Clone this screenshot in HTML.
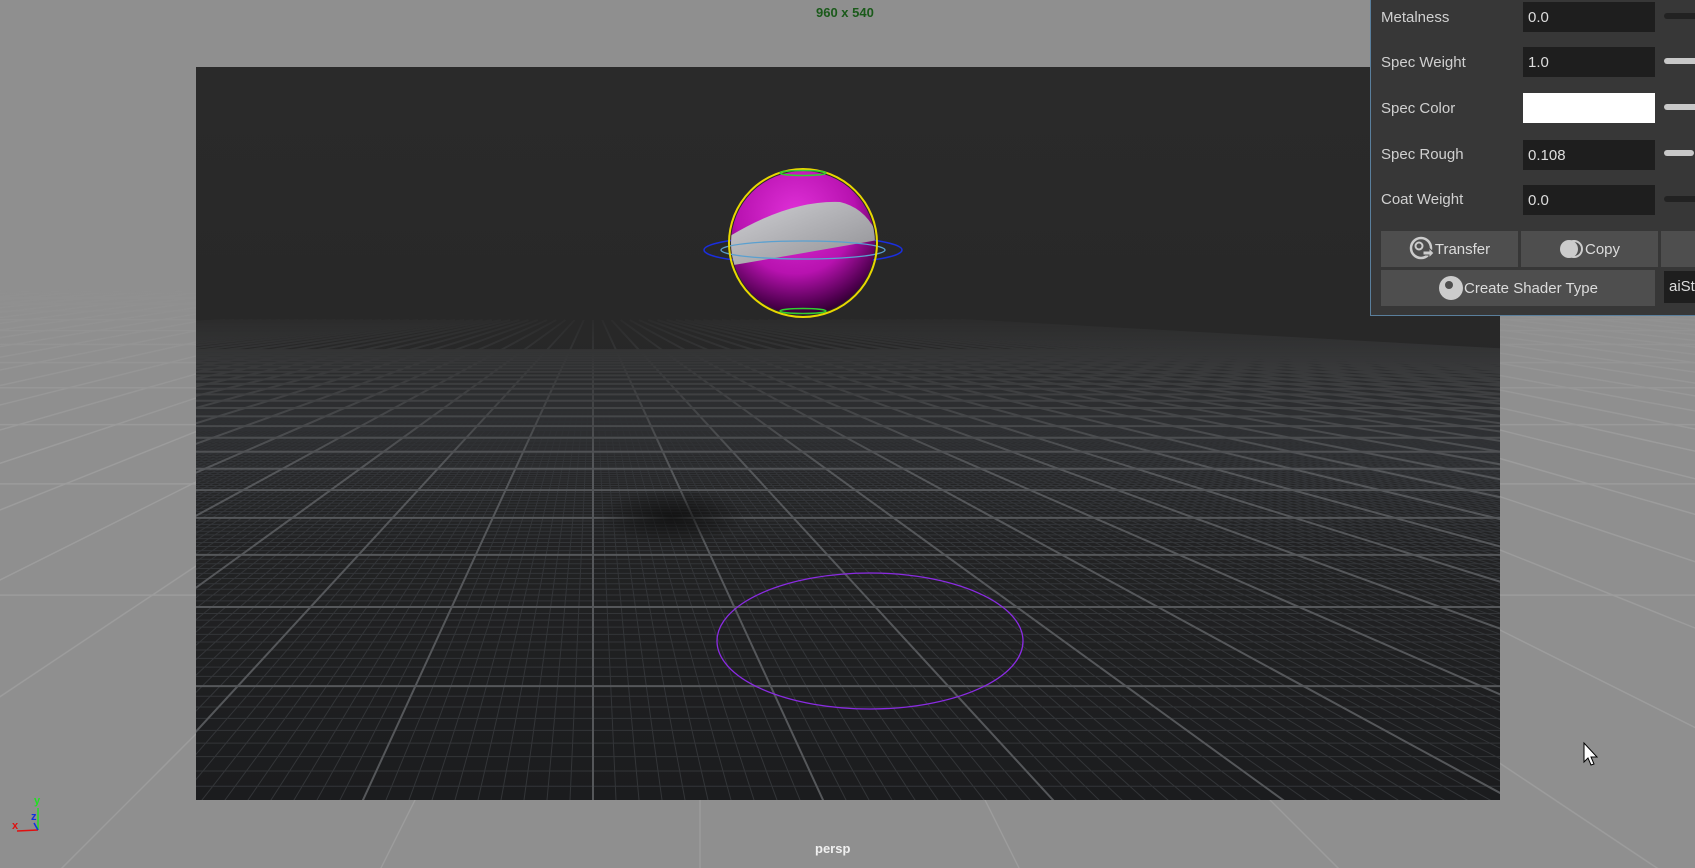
<!DOCTYPE html>
<html style="overflow:hidden"><head><meta charset="utf-8"><style>
*{margin:0;padding:0;box-sizing:border-box}
html,body{width:1695px;height:868px;overflow:hidden}
body{background:#8f8f8f;font-family:"Liberation Sans",sans-serif;position:relative}
svg{position:absolute;left:0;top:0}
.lbl{position:absolute;font-size:13px;font-weight:bold}
#panel{position:absolute;left:1370px;top:-2px;width:325px;height:318px;background:#373737;border:1px solid #5a7f9c;border-top:none;border-right:none;overflow:hidden}
.row{position:absolute;left:10px;color:#d0d0d0;font-size:15px}
.inp{position:absolute;left:152px;width:132px;height:30px;background:#1e1e1e;color:#ddd;font-size:15px;padding:7px 5px}
.trk{position:absolute;left:293px;width:40px;height:6px;border-radius:3px}
.btn{position:absolute;height:36px;background:#4e4e4e;color:#dcdcdc;font-size:15px;display:flex;align-items:center;justify-content:center}
</style></head><body>
<svg width="1695" height="868" id="s">
<defs>
<linearGradient id="vp" x1="0" y1="0" x2="0" y2="1"><stop offset="0" stop-color="#2a2a2a"/><stop offset="0.35" stop-color="#282828"/><stop offset="1" stop-color="#1b1c1e"/></linearGradient>
<linearGradient id="mg" gradientUnits="userSpaceOnUse" x1="0" y1="305" x2="0" y2="470"><stop offset="0" stop-color="#000"/><stop offset="1" stop-color="#fff"/></linearGradient>
<mask id="gm" maskUnits="userSpaceOnUse" x="0" y="0" width="1695" height="868"><rect x="0" y="0" width="1695" height="868" fill="url(#mg)"/></mask>
<linearGradient id="omg" gradientUnits="userSpaceOnUse" x1="0" y1="280" x2="0" y2="450"><stop offset="0" stop-color="#000"/><stop offset="1" stop-color="#fff"/></linearGradient>
<mask id="om" maskUnits="userSpaceOnUse" x="0" y="0" width="1695" height="868"><rect x="0" y="0" width="1695" height="868" fill="url(#omg)"/></mask>
<clipPath id="cv"><rect x="196" y="67" width="1304" height="733"/></clipPath>
<radialGradient id="sh"><stop offset="0" stop-color="#0d0d0d" stop-opacity="0.8"/><stop offset="1" stop-color="#0d0d0d" stop-opacity="0"/></radialGradient>
<radialGradient id="ball" cx="0.45" cy="0.3" r="0.75"><stop offset="0" stop-color="#e030d8"/><stop offset="0.55" stop-color="#b812b0"/><stop offset="0.85" stop-color="#500050"/><stop offset="1" stop-color="#1a001a"/></radialGradient>
<linearGradient id="wb" x1="0" y1="0" x2="1" y2="1"><stop offset="0" stop-color="#d0d0d4"/><stop offset="1" stop-color="#8e8e92"/></linearGradient>
<clipPath id="bc"><circle cx="803" cy="243" r="72"/></clipPath>
</defs>
<g mask="url(#om)"><g id="outer" stroke="#a6a6a6" stroke-width="1.5" opacity="0.6"></g></g>
<rect x="196" y="67" width="1304" height="733" fill="url(#vp)"/>
<g clip-path="url(#cv)"><g mask="url(#gm)"><g id="minor" stroke="#333538" stroke-width="1"></g><g id="major" stroke="#55575a" stroke-width="2"></g></g>
<ellipse cx="672" cy="517" rx="75" ry="28" fill="url(#sh)"/>
</g>
<ellipse cx="870" cy="641" rx="153" ry="68" fill="none" stroke="#8a2be2" stroke-width="1.3"/>
<ellipse cx="803" cy="250" rx="99" ry="14" fill="none" stroke="#1a2ee0" stroke-width="1.5"/>
<circle cx="803" cy="243" r="72" fill="url(#ball)"/>
<g clip-path="url(#bc)">
<path d="M730 236 Q790 200 840 202 Q866 208 878 236 L878 240 Q810 252 728 266 Z" fill="url(#wb)"/>
</g>
<ellipse cx="803" cy="250" rx="82" ry="9" fill="none" stroke="#5aa0d0" stroke-width="1.3"/>
<circle cx="803" cy="243" r="74" fill="none" stroke="#e8d800" stroke-width="2"/>
<ellipse cx="803" cy="173" rx="23" ry="2.5" fill="none" stroke="#30d030" stroke-width="1.5"/>
<ellipse cx="803" cy="311" rx="23" ry="2.5" fill="none" stroke="#30d030" stroke-width="1.5"/>
<line x1="38" y1="830" x2="38" y2="808" stroke="#20e020" stroke-width="1.5"/>
<line x1="38" y1="830" x2="17" y2="831" stroke="#e01010" stroke-width="1.5"/>
<line x1="38" y1="830" x2="34" y2="823" stroke="#1030e0" stroke-width="1.5"/>
<text x="34" y="804" fill="#20e020" font-size="11" font-weight="bold" font-family="Liberation Sans">y</text>
<text x="31" y="820" fill="#1030e0" font-size="11" font-weight="bold" font-family="Liberation Sans">z</text>
<text x="12" y="829" fill="#e01010" font-size="11" font-weight="bold" font-family="Liberation Sans">x</text>
<path d="M1584 743 L1584 762 L1588 758 L1591 765 L1594 764 L1591 757 L1597 757 Z" fill="#fff" stroke="#000" stroke-width="1"/>
</svg>
<div class="lbl" style="left:816px;top:5px;color:#1a5a1a">960 x 540</div>
<div class="lbl" style="left:815px;top:841px;color:#f0f0f0">persp</div>
<div id="panel">
<div class="row" style="top:11px">Metalness</div><div class="inp" style="top:4px">0.0</div><div class="trk" style="top:15px;background:#222"></div>
<div class="row" style="top:56px">Spec Weight</div><div class="inp" style="top:49px">1.0</div><div class="trk" style="top:60px;background:#c8c8c8"></div>
<div class="row" style="top:102px">Spec Color</div><div class="inp" style="top:95px;background:#fff"></div><div class="trk" style="top:106px;background:#c8c8c8"></div>
<div class="row" style="top:148px">Spec Rough</div><div class="inp" style="top:142px">0.108</div><div class="trk" style="top:152px;background:#c8c8c8;width:30px"></div>
<div class="row" style="top:193px">Coat Weight</div><div class="inp" style="top:187px">0.0</div><div class="trk" style="top:198px;background:#222"></div>
<div class="btn" style="left:10px;top:233px;width:137px"><svg style="position:static" width="26" height="26" viewBox="0 0 26 26"><circle cx="12" cy="12" r="10" fill="none" stroke="#ccc" stroke-width="2.5"/><circle cx="10" cy="10" r="3.5" fill="none" stroke="#ccc" stroke-width="2"/><path d="M14 15h6v-3l5 5-5 5v-3h-6z" fill="#ccc" stroke="#4e4e4e"/></svg>Transfer</div>
<div class="btn" style="left:150px;top:233px;width:137px"><svg style="position:static" width="26" height="22" viewBox="0 0 26 22"><circle cx="15" cy="11" r="8" fill="none" stroke="#ccc" stroke-width="2"/><circle cx="10" cy="11" r="9" fill="#ccc"/></svg>Copy</div>
<div class="btn" style="left:290px;top:233px;width:40px"></div>
<div class="btn" style="left:10px;top:272px;width:274px"><svg style="position:static" width="26" height="26" viewBox="0 0 26 26"><circle cx="13" cy="13" r="12" fill="#ccc"/><circle cx="11" cy="10" r="4" fill="#4e4e4e"/></svg>Create Shader Type</div>
<div class="inp" style="left:293px;top:273px;width:40px;height:32px;font-size:15px">aiSt</div>
</div>
<script>
var NS="http://www.w3.org/2000/svg";
function L(g,x1,y1,x2,y2){var l=document.createElementNS(NS,"line");l.setAttribute("x1",x1);l.setAttribute("y1",y1);l.setAttribute("x2",x2);l.setAttribute("y2",y2);g.appendChild(l);}
var H=300,cx=593,sh=0.46,mi=document.getElementById("minor"),ma=document.getElementById("major");
for(var i=-400;i<=400;i++){var X=i/10;var g=(i%10==0)?ma:mi;var dB=520,dT=(i%10==0)?20:50;
 L(g,cx+X*sh*dB,H+dB,cx+X*sh*dT,H+dT);}
for(var j=0;j<=400;j++){var inv=1/520+j*0.0000667;var d=1/inv;var maj=(j%10==0);if(d<(maj?20:50))break;var g=maj?ma:mi;L(g,0,H+d,1695,H+d);}
var o=document.getElementById("outer");
var H2=230,c2=700;
for(var i=-30;i<=30;i++){L(o,c2+i*0.5*900,H2+900,c2+i*0.5*60,H2+60);}
for(var j=0;j<40;j++){var inv=1/650+j*0.0012;var d=1/inv;if(d<60)break;L(o,0,H2+d,1695,H2+d);}
</script>
</body></html>
